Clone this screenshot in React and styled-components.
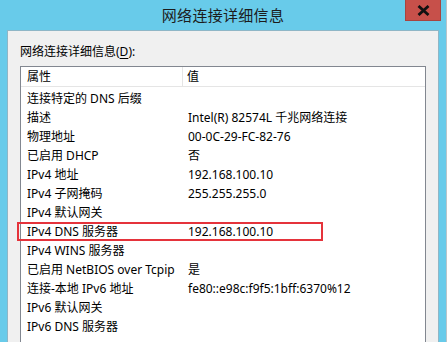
import styled, { createGlobalStyle } from 'styled-components';

const GlobalStyle = createGlobalStyle`
  html, body {
    margin: 0;
    padding: 0;
    background: #ffffff;
  }
  body {
    font-family: "Noto Sans", "Noto Sans CJK SC", sans-serif;
  }
`;

const Window = styled.div`
  width: 447px;
  height: 342px;
  background: #68cbea;
  display: flex;
  flex-direction: column;
  overflow: hidden;
  box-sizing: border-box;
  border-right: 1px solid #b9c4c9;
`;

const TitleBar = styled.div`
  height: 30px;
  flex: none;
  display: grid;
  grid-template-columns: 1fr auto 1fr;
  align-items: start;
`;

const Title = styled.div`
  grid-column: 2;
  font-family: "Noto Sans CJK SC", sans-serif;
  font-size: 15px;
  line-height: 30px;
  color: #1c1c1c;
  letter-spacing: 0.3px;
`;

const CloseButton = styled.div`
  grid-column: 3;
  justify-self: end;
  margin-right: 5px;
  width: 36px;
  height: 21px;
  background: #c7504a;
  box-sizing: border-box;
  border: 1px solid #a8443f;
  border-top: none;
  display: flex;
  align-items: center;
  justify-content: center;
`;

const Body = styled.div`
  flex: 1;
  margin: 0 7px;
  background: #f0f0f0;
  border: 1px solid #8fb6c6;
  border-bottom: none;
  padding: 13px 12px 0 12px;
  display: flex;
  flex-direction: column;
  gap: 6px;
`;

const Label = styled.div`
  font-size: 12px;
  line-height: 16px;
  color: #000;
  u {
    text-decoration: underline;
    text-underline-offset: 2px;
  }
`;

const List = styled.div`
  flex: 1;
  background: #fff;
  border: 1px solid #828790;
  border-bottom: none;
  display: flex;
  flex-direction: column;
`;

const Header = styled.div`
  display: grid;
  grid-template-columns: 162px 1fr;
  height: 19px;
  border-bottom: 1px solid #e5e5e5;
  margin-bottom: 2px;
`;

const HeaderCell = styled.div`
  font-size: 12px;
  line-height: 19px;
  color: #000;
  padding-left: ${(p) => (p.$first ? '6px' : '4px')};
  border-right: ${(p) => (p.$first ? '1px solid #e5e5e5' : 'none')};
`;

const Row = styled.div`
  position: relative;
  display: grid;
  grid-template-columns: 162px 1fr;
  height: 19px;

  &::after {
    content: '';
    display: ${(p) => (p.$highlight ? 'block' : 'none')};
    position: absolute;
    left: -4px;
    top: 0;
    width: 306px;
    height: 19px;
    box-sizing: border-box;
    border: 2px solid #e5333b;
  }
`;

const Cell = styled.div`
  font-size: 12px;
  line-height: 19px;
  color: #000;
  white-space: nowrap;
  padding-left: ${(p) => (p.$first ? '6px' : '5px')};
`;

const rows = [
  ['连接特定的 DNS 后缀', ''],
  ['描述', 'Intel(R) 82574L 千兆网络连接'],
  ['物理地址', '00-0C-29-FC-82-76'],
  ['已启用 DHCP', '否'],
  ['IPv4 地址', '192.168.100.10'],
  ['IPv4 子网掩码', '255.255.255.0'],
  ['IPv4 默认网关', ''],
  ['IPv4 DNS 服务器', '192.168.100.10', true],
  ['IPv4 WINS 服务器', ''],
  ['已启用 NetBIOS over Tcpip', '是'],
  ['连接-本地 IPv6 地址', 'fe80::e98c:f9f5:1bff:6370%12'],
  ['IPv6 默认网关', ''],
  ['IPv6 DNS 服务器', ''],
];

export default function App() {
  return (
    <>
      <GlobalStyle />
      <Window>
        <TitleBar>
          <Title>网络连接详细信息</Title>
          <CloseButton>
            <svg width="13" height="11" viewBox="0 0 13 11">
              <path d="M1.5 1 L11.5 10 M11.5 1 L1.5 10" stroke="#111" strokeWidth="2.8" fill="none" />
            </svg>
          </CloseButton>
        </TitleBar>
        <Body>
          <Label>
            网络连接详细信息(<u>D</u>):
          </Label>
          <List>
            <Header>
              <HeaderCell $first>属性</HeaderCell>
              <HeaderCell>值</HeaderCell>
            </Header>
            {rows.map(([k, v, hl]) => (
              <Row key={k} $highlight={hl}>
                <Cell $first>{k}</Cell>
                <Cell>{v}</Cell>
              </Row>
            ))}
          </List>
        </Body>
      </Window>
    </>
  );
}
